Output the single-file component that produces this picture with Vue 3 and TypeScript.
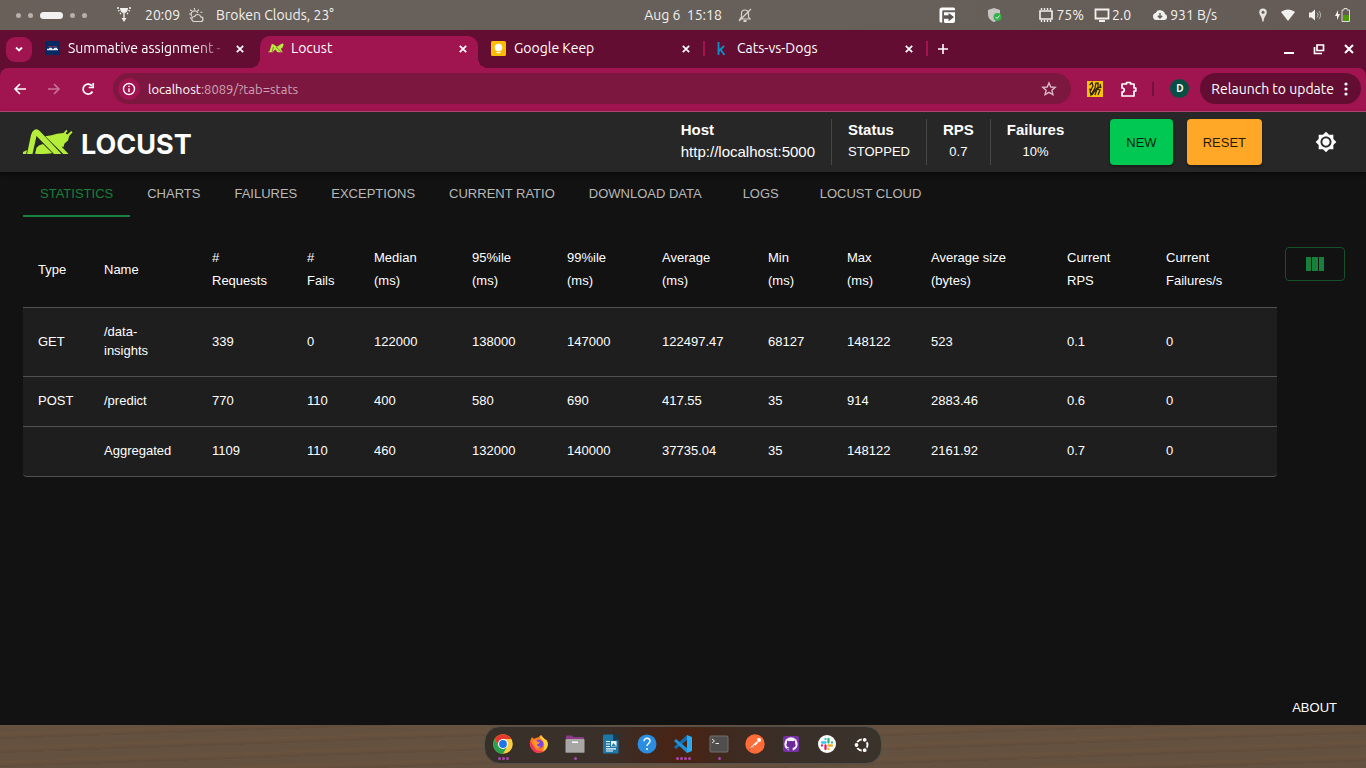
<script setup lang="ts">
interface BrowserTab {
  title: string
  icon: 'school' | 'locust' | 'keep' | 'kaggle'
  active?: boolean
  fade?: boolean
  divider?: boolean
}

interface Column {
  label: string
  second?: string
  width: number
}

const browserTabs: BrowserTab[] = [
  { title: 'Summative assignment -', icon: 'school', fade: true },
  { title: 'Locust', icon: 'locust', active: true },
  { title: 'Google Keep', icon: 'keep', divider: true },
  { title: 'Cats-vs-Dogs', icon: 'kaggle', divider: true },
]

const navTabs: string[] = [
  'STATISTICS',
  'CHARTS',
  'FAILURES',
  'EXCEPTIONS',
  'CURRENT RATIO',
  'DOWNLOAD DATA',
  'LOGS',
  'LOCUST CLOUD',
]

const columns: Column[] = [
  { label: 'Type', width: 66 },
  { label: 'Name', width: 108 },
  { label: '#', second: 'Requests', width: 95 },
  { label: '#', second: 'Fails', width: 67 },
  { label: 'Median', second: '(ms)', width: 98 },
  { label: '95%ile', second: '(ms)', width: 95 },
  { label: '99%ile', second: '(ms)', width: 95 },
  { label: 'Average', second: '(ms)', width: 106 },
  { label: 'Min', second: '(ms)', width: 79 },
  { label: 'Max', second: '(ms)', width: 84 },
  { label: 'Average size', second: '(bytes)', width: 136 },
  { label: 'Current', second: 'RPS', width: 99 },
  { label: 'Current', second: 'Failures/s', width: 126 },
]

const totalWidth = columns.reduce((sum, c) => sum + c.width, 0)
const share = (c: Column): string => `${(c.width / totalWidth) * 100}%`

const rows: string[][] = [
  ['GET', '/data-insights', '339', '0', '122000', '138000', '147000', '122497.47', '68127', '148122', '523', '0.1', '0'],
  ['POST', '/predict', '770', '110', '400', '580', '690', '417.55', '35', '914', '2883.46', '0.6', '0'],
  ['', 'Aggregated', '1109', '110', '460', '132000', '140000', '37735.04', '35', '148122', '2161.92', '0.7', '0'],
]

const dock: { name: string; dots: number }[] = [
  { name: 'chrome', dots: 3 },
  { name: 'firefox', dots: 0 },
  { name: 'files', dots: 1 },
  { name: 'writer', dots: 0 },
  { name: 'help', dots: 0 },
  { name: 'code', dots: 4 },
  { name: 'terminal', dots: 1 },
  { name: 'postman', dots: 0 },
  { name: 'github', dots: 0 },
  { name: 'slack', dots: 0 },
  { name: 'ubuntu', dots: 0 },
]
</script>

<template>
  <div class="desktop">
    <header class="panel">
      <div class="panel-left">
        <div class="workspaces">
          <i></i><i></i><i class="current"></i><i></i><i></i>
        </div>
        <svg class="prayer" width="16" height="18" viewBox="0 0 16 18" fill="#f2f0ee">
          <path d="M4 2h8c0 3-1.600 5-4 5s-4-2-4-5z" />
          <path d="M1 2h2M13 2h2M2 5l1.500-.7M14 5l-1.500-.7M4 8l1-1M12 8l-1-1M8 7v6" stroke="#f2f0ee" stroke-width="1.300" />
          <path d="M5.500 12h5L8 16z" />
        </svg>
        <span class="clock">20:09</span>
        <svg class="weather" width="16" height="16" viewBox="0 0 16 16" fill="none" stroke="#dcd9d5" stroke-width="1.200">
          <path d="M6.500 1v1.800M2.200 2.600l1.400 1.400M1 7h1.800M10.800 2.600L9.500 4M2 11.500l1.300-1M12.500 5.500l1.800-.5" />
          <path d="M3.800 9.500A3.500 3.500 0 1 1 9.800 6" />
          <path d="M6 14.500h6.500a2.300 2.300 0 0 0 .3-4.600A3.300 3.300 0 0 0 6.600 9.500a2.500 2.500 0 0 0-.6 5z" />
        </svg>
        <span>Broken Clouds, 23°</span>
      </div>
      <span class="date">Aug 6&nbsp; 15:18</span>
      <div class="panel-right">
        <svg class="bell" width="14" height="16" viewBox="0 0 14 16" fill="none" stroke="#d5d2ce" stroke-width="1.200">
          <path d="M2 12h10l-1.500-2V6.500a3.500 3.500 0 0 0-7 0V10zM1 14L13 2" />
          <path d="M5.500 14h3" stroke-width="2" />
        </svg>
        <svg class="login" width="18" height="18" viewBox="0 0 18 18">
          <path d="M3 16.500A1.500 1.500 0 0 1 1.500 15V4A2.500 2.500 0 0 1 4 1.500H15.500A1.500 1.500 0 0 1 17 3v1.200H5.500A1.300 1.300 0 0 0 4.200 5.500v11z" fill="#fff" />
          <path d="M6 6.200h11V15a2 2 0 0 1-2 2H7.500A1.500 1.500 0 0 1 6 15.500v-2.700h4.500v2.400l5.500-4.200-5.500-4v2.300H6z" fill="#fff" />
          <path d="M6 10.200h5V7.500l4.500 3.700-4.500 3.600v-2.600H6z" fill="#5c554f" />
        </svg>
        <svg class="shield" width="16" height="16" viewBox="0 0 16 16">
          <path d="M7 1l6 2v4c0 4-2.500 6.500-6 8-3.500-1.500-6-4-6-8V3z" fill="#c8c6c4" />
          <circle cx="10.500" cy="10" r="4" fill="#35b04a" />
          <path d="M8.500 10l1.500 1.500 2.500-3" fill="none" stroke="#e3f5e6" />
        </svg>
        <span class="metric memory">
          <svg width="16" height="16" viewBox="0 0 16 16" fill="none" stroke="#f2f0ee">
            <path d="M2 4h12v8H2z" stroke-width="1.600" />
            <path d="M3.500 1v2M6.500 1v2M9.500 1v2M12.500 1v2M3.500 13v2M6.500 13v2M9.500 13v2M12.500 13v2" stroke-width="1.400" />
          </svg>75%
        </span>
        <span class="metric load">
          <svg width="16" height="16" viewBox="0 0 16 16" fill="none" stroke="#f2f0ee" stroke-width="1.800">
            <path d="M1.500 2.500h13v9h-13zM5 14h6" />
          </svg>2.0
        </span>
        <span class="metric net">
          <svg width="16" height="16" viewBox="0 0 16 16">
            <path d="M4 13a3.600 3.600 0 0 1-.4-7A5 5 0 0 1 13 7a3.100 3.100 0 0 1-.5 6z" fill="#f2f0ee" />
            <path d="M8 6v4M5.800 8.700L8 11l2.200-2.300" fill="none" stroke="#67605a" stroke-width="1.500" />
          </svg>931 B/s
        </span>
        <svg width="12" height="16" viewBox="0 0 12 16">
          <path d="M6 1.500A3.800 3.800 0 0 0 2.200 5.300C2.200 8 5.300 10 5.300 14.500h1.400c0-4.500 3.100-6.500 3.100-9.200A3.800 3.800 0 0 0 6 1.500z" fill="#e4e1de" />
          <circle cx="6" cy="5.300" r="1.500" fill="#67605a" />
        </svg>
        <svg width="16" height="16" viewBox="0 0 16 16" fill="#f2f0ee">
          <path d="M1 5c4-3.500 10-3.500 14 0l-7 9z" />
        </svg>
        <svg width="16" height="16" viewBox="0 0 16 16">
          <path d="M2 5.500h2.500L8 2.500v11l-3.500-3H2z" fill="#f2f0ee" />
          <path d="M10 5.500a3.500 3.500 0 0 1 0 5M12 4a6 6 0 0 1 0 8" fill="none" stroke="#bab5b0" />
        </svg>
        <svg width="18" height="16" viewBox="0 0 18 16">
          <path d="M4 3L1 9h2v4l3-6H4z" fill="#f2f0ee" />
          <path d="M8 3h2V1.500h3V3h2.500v11.500H8z" fill="none" stroke="#dedbd8" />
          <path d="M9 8h6v6H9z" fill="#4d9c06" />
        </svg>
      </div>
    </header>

    <section class="browser">
      <div class="tab-strip">
        <button class="tab-search" aria-label="Search tabs">
          <svg width="10" height="10" viewBox="0 0 10 10" fill="none" stroke="#fff" stroke-width="1.800"><path d="M2 3.500l3 3 3-3" /></svg>
        </button>
        <div v-for="tab in browserTabs" :key="tab.title" class="browser-tab" :class="{ active: tab.active, divider: tab.divider }">
          <svg v-if="tab.icon === 'school'" width="16" height="16" viewBox="0 0 16 16">
            <path d="M0 1h15v14H0z" fill="#052a62" />
            <path d="M2 9.500h11M4 8.500h3M9 8.500h3" stroke="#dfe6f0" stroke-width="1.400" />
            <path d="M3 6.500h9" stroke="#6d2a58" />
          </svg>
          <svg v-else-if="tab.icon === 'locust'" width="16" height="16" viewBox="0 0 50 50" fill="#b5ed3b">
            <path d="M0 38L5 34 12 12 18 14 28 21 45 10 49 14 45 24 40 27 46 38H30L23 30 14 38z" />
            <path d="M17 22l-4 15M26 22l15 15" stroke="#a0144f" stroke-width="2" />
          </svg>
          <svg v-else-if="tab.icon === 'keep'" width="16" height="16" viewBox="0 0 16 16">
            <rect y="1" width="15" height="15" rx="1.500" fill="#fbbc04" />
            <circle cx="7.500" cy="7.500" r="3.800" fill="#fff" />
            <path d="M5.500 10h4v1h-4zM5.500 12h4v1.200h-4z" fill="#fff" />
          </svg>
          <svg v-else width="16" height="16" viewBox="0 0 16 16" fill="none" stroke="#0d91c9" stroke-width="1.800">
            <path d="M4.500 2v13M10 6l-5 5M6.500 9.500L10.500 15" />
          </svg>
          <span class="tab-title" :class="{ fade: tab.fade }">{{ tab.title }}</span>
          <button class="close" :aria-label="`Close ${tab.title}`">
            <svg width="10" height="10" viewBox="0 0 10 10" stroke="#fff" stroke-width="1.700"><path d="M1.800 1.800l6.400 6.400M8.200 1.800L1.800 8.200" /></svg>
          </button>
        </div>
        <button class="new-tab" aria-label="New tab">
          <svg width="12" height="12" viewBox="0 0 12 12" stroke="#fff" stroke-width="1.600"><path d="M6 1v10M1 6h10" /></svg>
        </button>
        <div class="window-controls">
          <button aria-label="Minimize"><svg width="12" height="12" viewBox="0 0 12 12" stroke="#fff" stroke-width="2"><path d="M1 10h10" /></svg></button>
          <button aria-label="Restore">
            <svg width="12" height="12" viewBox="0 0 12 12" fill="none" stroke="#fff" stroke-width="1.700"><path d="M4 2h6.500v5.500H4zM1.500 4v6.500H9" /></svg>
          </button>
          <button aria-label="Close window"><svg width="12" height="12" viewBox="0 0 12 12" stroke="#fff" stroke-width="2"><path d="M2 2l8 8M10 2l-8 8" /></svg></button>
        </div>
      </div>

      <div class="toolbar">
        <button class="tool" aria-label="Back"><svg width="14" height="14" viewBox="0 0 14 14" fill="none" stroke="#fff" stroke-width="1.600"><path d="M13 7H2M7 2L2 7l5 5" /></svg></button>
        <button class="tool dim" aria-label="Forward"><svg width="14" height="14" viewBox="0 0 14 14" fill="none" stroke="#fff" stroke-width="1.600"><path d="M1 7h11M7 2l5 5-5 5" /></svg></button>
        <button class="tool" aria-label="Reload">
          <svg width="14" height="14" viewBox="0 0 14 14" fill="none" stroke="#fff" stroke-width="1.700"><path d="M11.500 9.500A5 5 0 1 1 11 4" /><path d="M12.200 1v4.500H7.700" /></svg>
        </button>
        <div class="address">
          <button class="info" aria-label="Site information">
            <svg width="14" height="14" viewBox="0 0 14 14" fill="none" stroke="#fff" stroke-width="1.400"><circle cx="7" cy="7" r="5.500" /><path d="M7 6.300V10M7 3.800v1.300" /></svg>
          </button>
          <span class="url"><b>localhost</b>:8089/?tab=stats</span>
          <button class="star" aria-label="Bookmark this page">
            <svg width="16" height="16" viewBox="0 0 16 16" fill="none" stroke="#d9b9c7" stroke-width="1.400"><path d="M8 2l1.800 4 4.400.4-3.300 2.900 1 4.300L8 11.300l-3.900 2.300 1-4.300-3.300-2.900L6.200 6z" /></svg>
          </button>
        </div>
        <svg class="extension" width="16" height="16" viewBox="0 0 16 16">
          <path d="M0 0h16v16H0z" fill="#fcc20a" />
          <path d="M2.500 4L5 1.500 6 5l-3 5 1 4 4-7 1-5.500M2 8l3 1M8 3l3-1v4L7 11l-2 3M8 14l2-6 4-3M10 8l3 1-2 5M13 3l1 4" fill="none" stroke="#30240c" stroke-width="1.300" />
        </svg>
        <svg class="puzzle" width="18" height="18" viewBox="0 0 18 18" fill="none" stroke="#fff" stroke-width="1.700" stroke-linejoin="round">
          <path d="M2 4h4.500V2.500h4V4H14v4h1.800v3H14v5H2v-4c3 0 3-4 0-4z" />
        </svg>
        <i class="separator"></i>
        <span class="avatar">D</span>
        <button class="relaunch">
          Relaunch to update
          <svg width="4" height="14" viewBox="0 0 4 14" fill="#fff"><circle cx="2" cy="2" r="1.600" /><circle cx="2" cy="7" r="1.600" /><circle cx="2" cy="12" r="1.600" /></svg>
        </button>
      </div>
    </section>

    <div class="page">
      <header class="app-bar">
        <a class="brand" href="#">
          <svg width="50" height="26" viewBox="0 0 50 26" fill="#b5ed3b">
            <path d="M0 23L4 21 3.200 25H0z" />
            <path d="M4 25L8 6Q9 2 11.500 .7 13.500-.3 15.500 1L17 2.300 38.500 25H31L13.500 7 9.500 25z" />
            <path d="M12 24.800L13.500 18.800Q16 15.500 20 15L29.300 24.300Q22 25.600 12 24.800z" />
            <path d="M22.300 7.300Q29 6.500 34 4.800L40.500 4 43.300 .8 44.600 1.900 42.600 4.300 44.300 5.600 48.300 2 49.600 3.300 46.200 7 45 11.500 41.500 14.500 40.500 18 38.500 17.500 45.500 25H40.300z" />
          </svg>
          <span>LOCUST</span>
        </a>
        <dl class="stats">
          <div class="start"><dt>Host</dt><dd class="host">http://localhost:5000</dd></div>
          <div class="start"><dt>Status</dt><dd>STOPPED</dd></div>
          <div><dt>RPS</dt><dd>0.7</dd></div>
          <div><dt>Failures</dt><dd>10%</dd></div>
        </dl>
        <button class="action new">NEW</button>
        <button class="action reset">RESET</button>
        <button class="theme" aria-label="Toggle theme">
          <svg width="22" height="22" viewBox="0 0 24 24" fill="#fff">
            <path d="M20 8.690V4h-4.690L12 .69 8.690 4H4v4.690L.69 12 4 15.310V20h4.690L12 23.310 15.310 20H20v-4.690L23.310 12 20 8.690zM12 18c-3.310 0-6-2.690-6-6s2.690-6 6-6 6 2.690 6 6-2.690 6-6 6zm0-10c-2.210 0-4 1.790-4 4s1.790 4 4 4 4-1.790 4-4-1.790-4-4-4z" />
          </svg>
        </button>
      </header>

      <nav class="nav" aria-label="Reports">
        <button v-for="(name, i) in navTabs" :key="name" :class="{ selected: i === 0 }">{{ name }}</button>
      </nav>

      <main class="content">
        <table>
          <colgroup>
            <col v-for="(c, i) in columns" :key="i" :style="{ width: share(c) }" />
          </colgroup>
          <thead>
            <tr>
              <th v-for="(c, i) in columns" :key="i" scope="col">
                {{ c.label }}<template v-if="c.second"><br />{{ c.second }}</template>
              </th>
            </tr>
          </thead>
          <tbody>
            <tr v-for="row in rows" :key="row[1]">
              <td v-for="(cell, i) in row" :key="i" :class="{ name: i === 1 }">{{ cell }}</td>
            </tr>
          </tbody>
        </table>
        <button class="columns" aria-label="Choose columns">
          <svg width="18" height="14" viewBox="0 0 18 14" fill="#16803c"><path d="M0 0h5v14H0zM6 0h6v14H6zM13 0h5v14h-5z" /></svg>
        </button>
      </main>

      <footer class="footer"><button>ABOUT</button></footer>
    </div>

    <div class="wallpaper">
      <nav class="dock" aria-label="Dock">
        <button v-for="app in dock" :key="app.name" :aria-label="app.name">
          <svg width="20" height="20" viewBox="0 0 20 20">
            <template v-if="app.name === 'chrome'">
              <circle cx="10" cy="10" r="9.800" fill="#ffcd40" />
              <path d="M1.500 5.100A9.800 9.800 0 0 1 18.500 5.100H10L5.800 12.500z" fill="#e23b2e" />
              <path d="M1.500 5.100A9.800 9.800 0 0 0 10 19.800L14.200 12.500 10 14.800 5.800 12.500z" fill="#2aa14c" />
              <circle cx="10" cy="10" r="5" fill="#fff" />
              <circle cx="10" cy="10" r="3.900" fill="#1f74e8" />
            </template>
            <template v-else-if="app.name === 'firefox'">
              <path d="M2 5l1-2 2 2c1.500-1 3-1.500 4-1.500L12 1c1 2 3 3 4 4.500l1.500.5c1.800 3 2 6-.5 9.500s-9.500 5-13.500.5C0 12 .5 8 2 5z" fill="#ff7a22" />
              <path d="M12 1c1 2 3 3 4 4.500l1.500.5c1.800 3 1.800 6-.5 9-1 1-2 2-3.500 2C17 12 15 6 11 4z" fill="#ffd43a" />
              <path d="M1.500 7c-1 4 0 7.500 3 9.900 3 2.400 7 2.200 10-.4-5 1.500-9-.5-10-4.500z" fill="#f52f5e" />
              <circle cx="10" cy="10" r="4.300" fill="#7c42e6" />
              <path d="M4 7c2-1 4 0 5 1l2 .5c-1 1.500-2 1.500-3 1.700 0 2 2 3 4 2-2 3-6 2-7-1z" fill="#ff9a28" />
            </template>
            <template v-else-if="app.name === 'files'">
              <path d="M1 2.500A1 1 0 0 1 2 1.500h5l1.500 1.500H18a1 1 0 0 1 1 1V8H1z" fill="#8b3a86" />
              <rect x="0.500" y="5" width="19" height="14" rx="1" fill="#a9a7a6" />
              <path d="M7 7.500h6v1.500H7z" fill="#fff" />
              <path d="M1 18h18v1H1z" fill="#858382" />
            </template>
            <template v-else-if="app.name === 'writer'">
              <path d="M3 .5h9l5.500 6V18.500a1 1 0 0 1-1 1H3a1 1 0 0 1-1-1v-17z" fill="#1d78a9" />
              <path d="M12 .5l5.500 6H12zM14 .5h4v4z" fill="#0c3d5b" />
              <path d="M5 7.500h4M5 10h4M5 12.500h4M5 14.800h10M5 17h7" stroke="#fff" stroke-width="1.200" />
              <path d="M10 7h5.500v5.500H10z" fill="#e8f5fc" />
              <path d="M10.500 12l2-3 2.500 3z" fill="#247aa6" />
            </template>
            <template v-else-if="app.name === 'help'">
              <circle cx="10" cy="10" r="9.500" fill="#2b8ee0" />
              <path d="M7 7.200C7 3.200 13 3.500 13 7c0 2.500-3 2.500-3 5M10 14v2" fill="none" stroke="#fff" stroke-width="1.500" />
            </template>
            <template v-else-if="app.name === 'code'">
              <path d="M14 1l5 2v14l-5 2z" fill="#2aaaf2" />
              <path d="M14 1v5L3 15l-2-2z" fill="#0f70b5" />
              <path d="M14 19v-5L3 5 1 7z" fill="#1c91dc" />
            </template>
            <template v-else-if="app.name === 'terminal'">
              <rect x="1" y="2" width="18" height="16" rx="1" fill="#504e4d" stroke="#737170" />
              <path d="M3 5l2.500 2L3 9M6.500 9.500H10" fill="none" stroke="#e9e9e9" />
            </template>
            <template v-else-if="app.name === 'postman'">
              <circle cx="10" cy="10" r="9.700" fill="#ff6c37" />
              <path d="M4.500 15.500l2-3 5-5 2 1-5 4.500z" fill="#fff" />
              <circle cx="14" cy="6" r="2" fill="#fff" />
              <path d="M4 16l6-5" stroke="#8b2f14" stroke-width=".7" />
            </template>
            <template v-else-if="app.name === 'github'">
              <rect x="2" y="2" width="16" height="16" rx="2" fill="#7831a5" />
              <circle cx="10" cy="10" r="6.700" fill="#f4eef7" />
              <path d="M6 6.500l2 .8c1.400-.4 2.800-.4 4 0l2-.8v2.500c1.500 3-.3 4.500-2.300 4.800V17H8.300v-1.500c-1.500.2-2-.4-2.800-1.600 1 .2 1.400.6 2.800.4v-.7C5.500 13 4.700 11 6 9z" fill="#6b2a98" />
            </template>
            <template v-else-if="app.name === 'slack'">
              <circle cx="10" cy="10" r="9" fill="#fff" />
              <g fill="none" stroke-width="2.300" stroke-linecap="round">
                <path d="M5 8.500h3.500M8.500 5v0" stroke="#36c5f0" />
                <path d="M11.500 5v3.500M15 8.500v0" stroke="#2eb67d" />
                <path d="M11.500 11.500H15M11.500 15v0" stroke="#ecb22e" />
                <path d="M8.500 11.500V15M5 11.500v0" stroke="#e01e5a" />
              </g>
            </template>
            <template v-else>
              <circle cx="9" cy="11" r="5.500" fill="none" stroke="#fff" stroke-width="1.900" />
              <circle cx="3.500" cy="11" r="2.500" fill="#fff" stroke="#392f28" stroke-width="1.200" />
              <circle cx="11.700" cy="5.800" r="2.500" fill="#fff" stroke="#392f28" stroke-width="1.200" />
              <circle cx="11.700" cy="16.200" r="2.500" fill="#fff" stroke="#392f28" stroke-width="1.200" />
            </template>
          </svg>
          <span class="dots"><i v-for="n in app.dots" :key="n"></i></span>
        </button>
      </nav>
    </div>
  </div>
</template>

<style>
body {
  margin: 0;
  background: #121212;
}
</style>

<style scoped>
.desktop {
  display: flex;
  flex-direction: column;
  min-height: 100vh;
  font-family: Ubuntu, "Noto Sans", sans-serif;
  color: #fff;
}

svg {
  display: block;
  flex: none;
}

button {
  margin: 0;
  padding: 0;
  border: 0;
  background: none;
  color: inherit;
  font: inherit;
  cursor: pointer;
}

/* System panel */
.panel {
  display: grid;
  grid-template-columns: 1fr auto 1fr;
  align-items: center;
  height: 30px;
  background: linear-gradient(90deg, #69605a, #67605a 60%, #645b57);
  color: #f2f0ee;
  font-size: 14px;
  line-height: 18px;
  white-space: nowrap;
}

.panel-left,
.panel-right,
.metric {
  display: flex;
  align-items: center;
}

.workspaces {
  display: flex;
  align-items: center;
  gap: 7px;
  margin: 0 29px 0 16px;
}

.workspaces i {
  width: 5px;
  height: 5px;
  border-radius: 50%;
  background: #b5b0ac;
}

.workspaces .current {
  width: 23px;
  height: 7px;
  border-radius: 4px;
  background: #f4f2f1;
}

.clock {
  margin: 0 8px 0 13px;
}

.weather {
  margin-right: 12px;
}

.panel-right {
  justify-content: flex-end;
  gap: 11px;
  padding-right: 14px;
}

.bell {
  margin: 0 auto 0 16px;
}

.login {
  margin-right: 20px;
}

.shield {
  margin-right: 24px;
}

.metric {
  gap: 2px;
}

.memory {
  margin-right: -1px;
}

.load {
  margin-right: 10px;
}

.net {
  margin-right: 29px;
}

/* Browser chrome */
.browser {
  background: #5f0e31;
  border-bottom: 1px solid #b54a75;
}

.tab-strip {
  display: flex;
  align-items: center;
  height: 38px;
  background: #640d32;
  font-size: 14px;
}

.tab-search {
  display: grid;
  place-items: center;
  width: 26px;
  height: 25px;
  margin: 0 5px 0 6px;
  border-radius: 9px;
  background: #a0144f;
}

.browser-tab {
  position: relative;
  box-sizing: border-box;
  display: flex;
  align-items: center;
  gap: 7px;
  flex: 0 1 223px;
  min-width: 0;
  height: 38px;
  padding: 0 15px 2px 8px;
}

.browser-tab.active {
  flex-basis: 218px;
  margin-right: 5px;
  padding-right: 10px;
}

.browser-tab > * {
  position: relative;
}

.browser-tab.active::before {
  content: "";
  position: absolute;
  inset: 6px 0 0;
  border-radius: 10px 10px 0 0;
  background: #a0144f;
}

.browser-tab.active::after {
  content: "";
  position: absolute;
  inset: auto -10px 0;
  height: 10px;
  background:
    radial-gradient(circle at 0 0, transparent 10px, #a0144f 10px) left / 10px 10px no-repeat,
    radial-gradient(circle at 100% 0, transparent 10px, #a0144f 10px) right / 10px 10px no-repeat;
}

.browser-tab.divider::after {
  content: "";
  position: absolute;
  right: 1px;
  top: 11px;
  width: 2px;
  height: 15px;
  background: #a0144f;
}

.tab-title {
  flex: 1;
  min-width: 0;
  overflow: hidden;
  white-space: nowrap;
}

.tab-title.fade {
  -webkit-mask-image: linear-gradient(90deg, #000 80%, transparent);
  mask-image: linear-gradient(90deg, #000 80%, transparent);
}

.close {
  padding-top: 2px;
}

.new-tab {
  margin-left: 8px;
}

.window-controls {
  display: flex;
  gap: 18px;
  margin-left: auto;
  padding-right: 11px;
}

.toolbar {
  display: flex;
  box-sizing: border-box;
  align-items: center;
  height: 43px;
  padding: 0 5px 2px 13px;
  border-radius: 8px 8px 0 0;
  background: #a0144f;
  font-size: 14px;
}

.tool {
  margin-right: 20px;
}

.dim {
  opacity: 0.4;
}

.address {
  display: flex;
  flex: 1;
  align-items: center;
  height: 31px;
  margin-left: -2px;
  padding: 0 14px 0 5px;
  border-radius: 16px;
  background: #7c183f;
}

.info {
  display: grid;
  place-items: center;
  width: 22px;
  height: 22px;
  margin-right: 8px;
  border-radius: 50%;
  background: #a0144f;
}

.url {
  flex: 1;
  color: #cea5b5;
  font-size: 13px;
}

.url b {
  color: #fff;
  font-weight: 400;
}

.extension {
  margin: 0 17px 0 16px;
}

.separator {
  width: 2px;
  height: 14px;
  margin: 0 16px 0 14px;
  background: #720f3a;
}

.avatar {
  display: grid;
  place-items: center;
  width: 19px;
  height: 19px;
  margin-right: 11px;
  border-radius: 50%;
  background: #064f44;
  font-size: 10px;
  font-weight: 600;
}

.relaunch {
  display: flex;
  align-items: center;
  gap: 10px;
  height: 31px;
  padding: 0 13px 0 11px;
  border-radius: 16px;
  background: #640d32;
  white-space: nowrap;
}

/* Locust page */
.page {
  display: flex;
  flex: 1;
  flex-direction: column;
  background: #121212;
  font-family: "Liberation Sans", Arial, sans-serif;
  font-size: 13px;
}

.app-bar {
  display: flex;
  align-items: center;
  height: 60px;
  padding: 0 29px 0 23px;
  background: #272727;
  box-shadow: 0 2px 4px rgb(0 0 0 / 50%);
}

.brand {
  display: flex;
  align-items: center;
  gap: 8px;
  margin-right: auto;
  color: #fff;
  font-family: Inter, sans-serif;
  font-size: 27px;
  font-weight: 700;
  line-height: 28px;
  text-decoration: none;
}

.brand span {
  padding-top: 6px;
}

.stats {
  display: flex;
  margin: 0 30px 0 0;
}

.stats div {
  height: 46px;
  padding: 0 16px;
  text-align: center;
}

.stats div + div {
  border-left: 1px solid #474747;
}

.stats dt {
  font-size: 15px;
  font-weight: 700;
  line-height: 22px;
}

.stats dd {
  margin: 0;
  line-height: 22px;
}

.stats .start {
  text-align: left;
}

.stats .host {
  font-size: 15px;
}

.action {
  height: 46px;
  padding: 0 16px;
  border-radius: 4px;
  color: rgb(0 0 0 / 87%);
  box-shadow: 0 2px 3px rgb(0 0 0 / 35%);
}

.new {
  margin-right: 14px;
  background: #00c853;
}

.reset {
  margin-right: 53px;
  background: #ffa726;
}

.nav {
  display: flex;
  height: 45px;
  padding-left: 23px;
}

.nav button {
  min-width: 84px;
  padding: 0 17px;
  border-bottom: 2px solid transparent;
  color: #b8b8b8;
}

.nav .selected {
  border-color: #16803c;
  color: #16803c;
}

.content {
  display: flex;
  align-items: flex-start;
  gap: 8px;
  padding: 14px 21px 0 23px;
}

table {
  flex: 1;
  table-layout: fixed;
  border-collapse: separate;
  border-spacing: 0;
}

th,
td {
  padding: 15px;
  border-bottom: 1px solid #515151;
  text-align: left;
  font-weight: 400;
  line-height: 19px;
}

th {
  line-height: 23px;
}

td {
  padding-top: 14px;
  padding-bottom: 16px;
  background: #1e1e1e;
}

.name {
  padding-right: 24px;
}

tbody tr:last-child td:first-child {
  border-bottom-left-radius: 4px;
}

tbody tr:last-child td:last-child {
  border-bottom-right-radius: 4px;
}

.columns {
  display: grid;
  place-items: center;
  box-sizing: border-box;
  width: 60px;
  height: 34px;
  margin-top: 16px;
  border: 1px solid #15502a;
  border-radius: 4px;
}

.footer {
  margin-top: auto;
  padding: 0 29px 10px;
  text-align: right;
}

/* Dock */
.wallpaper {
  display: flex;
  justify-content: center;
  height: 43px;
  background: repeating-linear-gradient(178deg, #65513f 0 7px, #69533f 9px, #604c3c 14px);
}

.dock {
  display: flex;
  box-sizing: border-box;
  height: 38px;
  margin-top: 1px;
  border: 1px solid #53504b;
  border-radius: 16px;
  background: linear-gradient(90deg, #373029, #3a3029 30%, #44261a 43%, #4a2312 50%, #40291e 60%, #392f28 75%, #39332b);
}

.dock button {
  display: flex;
  flex-direction: column;
  align-items: center;
  width: 36px;
  padding-top: 7px;
}

.dots {
  display: flex;
  gap: 1px;
  padding-top: 3px;
}

.dots i {
  width: 3px;
  height: 3px;
  border-radius: 50%;
  background: #ac46ad;
}
</style>
